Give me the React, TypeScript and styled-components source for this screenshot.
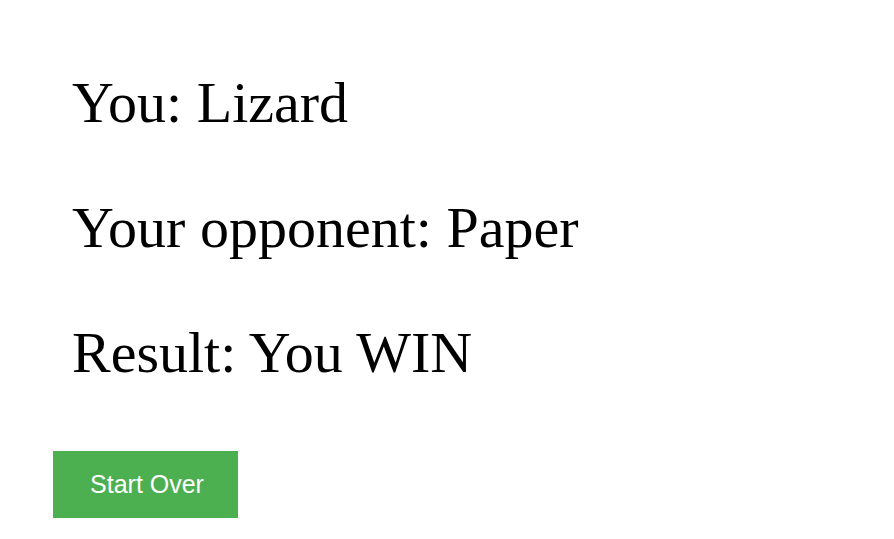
import styled, { createGlobalStyle } from 'styled-components';

const GlobalStyle = createGlobalStyle`
  body {
    margin: 0;
    background: #ffffff;
  }
`;

const Page = styled.main`
  display: flex;
  flex-direction: column;
  align-items: flex-start;
  padding: 71px 0 0 53px;
`;

const Lines = styled.div`
  display: flex;
  flex-direction: column;
  gap: 61px;
  padding-left: 19px;
`;

const Line = styled.p`
  margin: 0;
  font-family: 'Liberation Serif', 'Times New Roman', serif;
  font-size: 58px;
  line-height: 64px;
  color: #000000;
  white-space: nowrap;
`;

const Button = styled.button`
  margin-top: 66px;
  width: 185px;
  height: 67px;
  border: none;
  background-color: #4caf50;
  color: #ffffff;
  font-family: 'Liberation Sans', Arial, sans-serif;
  font-size: 25px;
  padding: 0 0 0 3px;
  cursor: pointer;
`;

export default function App() {
  const results = [
    { label: 'You', value: 'Lizard' },
    { label: 'Your opponent', value: 'Paper' },
    { label: 'Result', value: 'You WIN' },
  ];

  return (
    <>
      <GlobalStyle />
      <Page>
        <Lines>
          {results.map((r) => (
            <Line key={r.label}>
              {r.label}: {r.value}
            </Line>
          ))}
        </Lines>
        <Button type="button">Start Over</Button>
      </Page>
    </>
  );
}
